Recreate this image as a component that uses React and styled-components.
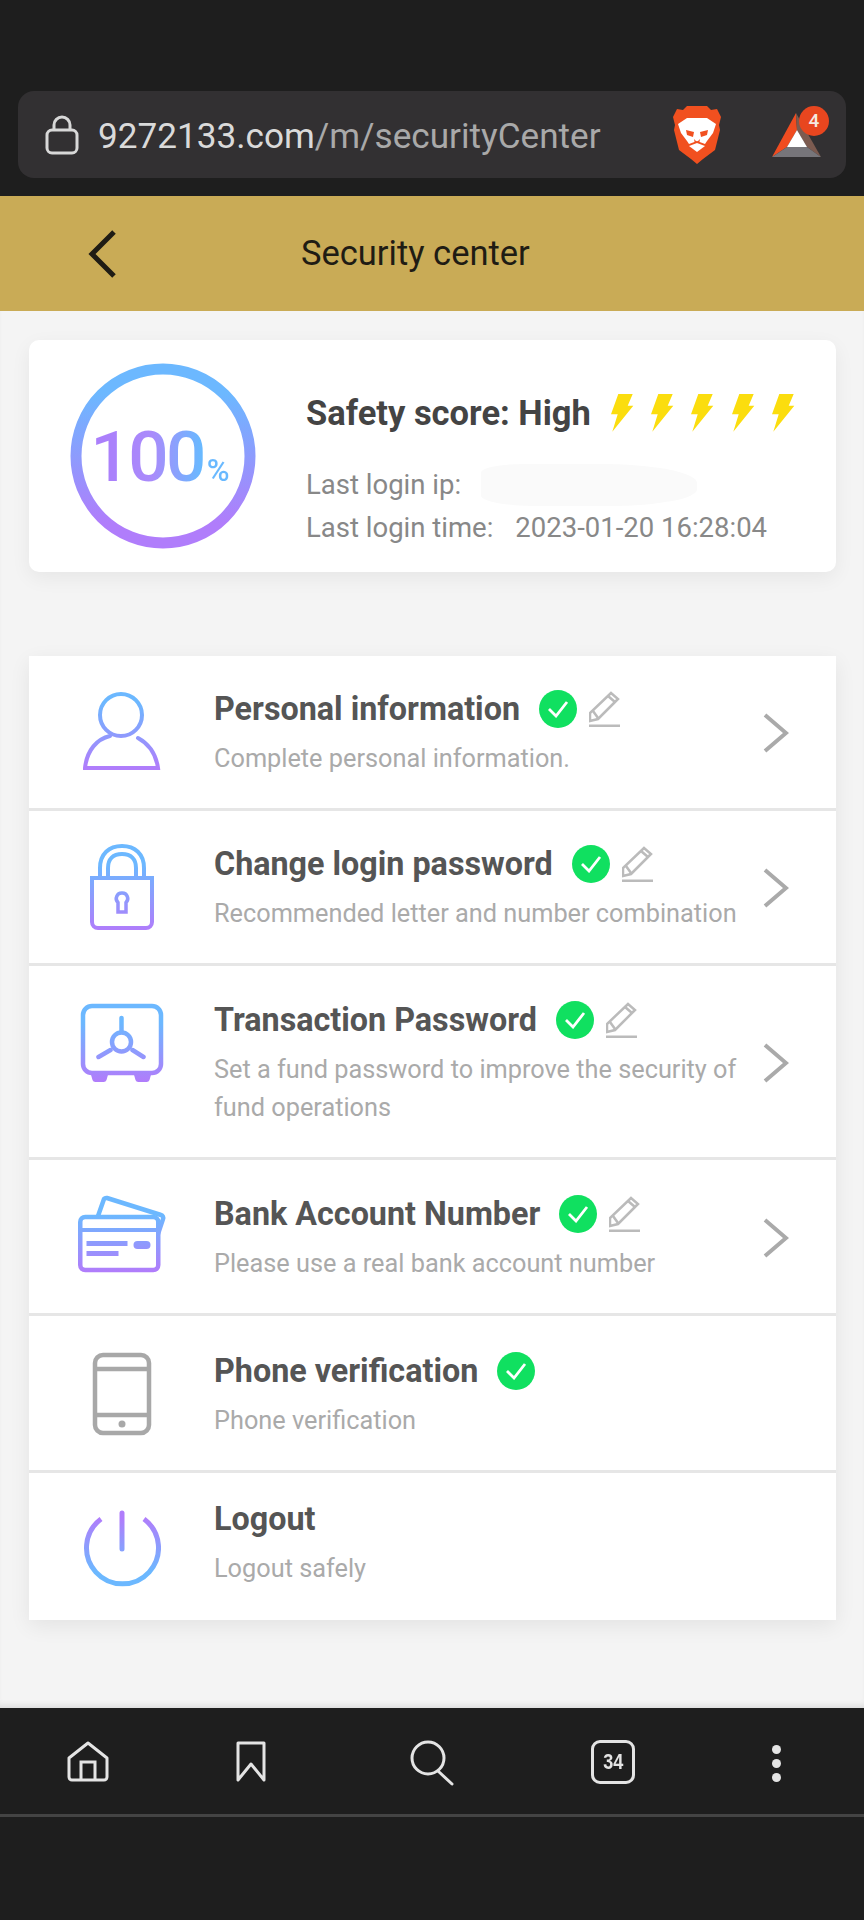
import React from "react";
import styled, { createGlobalStyle } from "styled-components";

const GlobalStyle = createGlobalStyle`
  html, body { margin: 0; padding: 0; background: #f4f4f4; }
  body { font-family: Roboto, "Liberation Sans", sans-serif; }
  * { box-sizing: border-box; }
`;

const Page = styled.div`
  width: 864px;
  height: 1920px;
  display: flex;
  flex-direction: column;
  overflow: hidden;
`;

const BrowserTop = styled.div`
  height: 196px;
  padding: 91px 18px 18px;
  background: #1e1e1e;
`;

const UrlBar = styled.div`
  height: 87px;
  display: flex;
  align-items: center;
  padding: 0 25px 0 27px;
  border-radius: 16px;
  background: #323032;
`;

const Url = styled.div`
  margin-left: 19px;
  padding-top: 3px;
  font-size: 35.15px;
  color: #a9a9a9;
  flex: 1;
  span { color: #dadada; }
`;

const ShieldBox = styled.div`
  width: 48px;
  height: 58px;
  margin-right: 51px;
`;

const RewardBox = styled.div`
  position: relative;
  width: 49px;
  height: 46px;
`;

const Badge = styled.div`
  position: absolute;
  top: -6px;
  right: -8px;
  width: 30px;
  height: 30px;
  border-radius: 50%;
  background: #e8461f;
  color: #f5e9e2;
  font-size: 19px;
  font-weight: 500;
  line-height: 30px;
  text-align: center;
`;

const Header = styled.header`
  height: 115px;
  display: flex;
  align-items: center;
  padding-left: 87px;
  background: #c9ab56;
`;

const Title = styled.h1`
  margin: 0 0 2px 184px;
  font-size: 34.5px;
  font-weight: 400;
  color: #1f1c14;
`;

const Main = styled.main`
  flex: 1;
  padding: 29px 28px 0 29px;
  background: #f4f4f4;
  box-shadow: inset 0 -6px 6px -4px #d8d8d8;
`;

const ScoreCard = styled.section`
  height: 232px;
  display: flex;
  align-items: center;
  padding-left: 41px;
  border-radius: 10px;
  background: #fff;
  box-shadow: 0 6px 20px rgba(0, 0, 0, 0.06);
`;

const Dial = styled.div`
  position: relative;
  width: 186px;
  height: 186px;
  margin-right: 50px;
  padding-right: 7px;
  display: flex;
  align-items: center;
  justify-content: center;
  flex-shrink: 0;
  svg { position: absolute; inset: 0; }
`;

const Percent = styled.div`
  font-size: 71px;
  font-weight: 500;
  line-height: 1;
  letter-spacing: -2.5px;
  background: linear-gradient(90deg, #ab7ffb 10%, #a98bfb 45%, #69b9ff 80%);
  -webkit-background-clip: text;
  background-clip: text;
  color: transparent;
  small { font-size: 31px; font-weight: 500; margin-left: 3px; letter-spacing: -1px; }
`;

const ScoreInfo = styled.div`
  align-self: flex-start;
  padding-top: 51px;
  display: flex;
  flex-direction: column;
`;

const ScoreLine = styled.div`
  display: flex;
  align-items: center;
  height: 44px;
  margin-bottom: 28px;
  font-size: 34.5px;
  font-weight: 700;
  color: #444;
`;

const Bolts = styled.div`
  display: flex;
  gap: 17.3px;
  margin-left: 20px;
`;

const LoginLine = styled.div`
  display: flex;
  align-items: center;
  height: 43px;
  font-size: 27.5px;
  color: #888;
`;

const LoginValue = styled.span`
  margin-left: 22px;
`;

const Smudge = styled.span`
  width: 216px;
  height: 42px;
  margin-left: 20px;
  border-radius: 20% 45% 40% 25%;
  background: #fafafa;
`;

const List = styled.section`
  margin-top: 84px;
  display: flex;
  flex-direction: column;
  gap: 3px;
  background: #e6e6e6;
  box-shadow: 0 6px 20px rgba(0, 0, 0, 0.07);
`;

const Row = styled.div`
  display: flex;
  align-items: flex-start;
  min-height: ${(p) => p.$height}px;
  background: #fff;
  position: relative;
`;

const IconCell = styled.div`
  width: 185px;
  flex-shrink: 0;
  display: flex;
  justify-content: center;
  padding-top: ${(p) => p.$top}px;
`;

const RowText = styled.div`
  flex: 1;
  padding-top: ${(p) => p.$top}px;
`;

const RowTitle = styled.div`
  display: flex;
  align-items: center;
  height: 46px;
  font-size: 32.3px;
  font-weight: 700;
  color: #555;
`;

const Check = styled.span`
  width: 38px;
  height: 38px;
  margin-left: 19px;
  border-radius: 50%;
  background: #10e060;
  display: flex;
  align-items: center;
  justify-content: center;
`;

const Pencil = styled.svg`
  margin-left: 12px;
`;

const RowSub = styled.div`
  width: 535px;
  margin-top: 8px;
  font-size: 25.3px;
  line-height: 38px;
  color: #aaa;
`;

const Arrow = styled.svg`
  align-self: center;
  margin: 2px 47px 0 0;
`;

const BottomBar = styled.footer`
  height: 212px;
  background: #1e1e1e;
`;

const NavIcons = styled.div`
  height: 109px;
  padding-top: 32px;
  display: grid;
  grid-template-columns: 176px 150px 212px 150px 176px;
  justify-items: center;
  align-items: start;
  border-bottom: 3px solid #444;
`;

const TabCount = styled.div`
  width: 44px;
  height: 44px;
  border: 3px solid #e4e4e4;
  border-radius: 9px;
  color: #e4e4e4;
  font-family: "Liberation Sans", sans-serif;
  font-size: 22px;
  font-weight: 700;
  line-height: 38px;
  text-align: center;
  span { display: inline-block; transform: scaleX(0.82); }
`;

const Dots = styled.div`
  display: flex;
  flex-direction: column;
  gap: 5px;
  padding-top: 5px;
  span { width: 9px; height: 9px; border-radius: 50%; background: #e4e4e4; }
`;

const Grad = ({ id, y1, y2, from = "#6cb8ff", to = "#b07dfb" }) => (
  <defs>
    <linearGradient id={id} gradientUnits="userSpaceOnUse" x1="0" x2="0" y1={y1} y2={y2}>
      <stop offset="0" stopColor={from} />
      <stop offset="1" stopColor={to} />
    </linearGradient>
  </defs>
);

const UserIcon = () => (
  <svg width="78" height="78" viewBox="0 0 78 78" fill="none">
    <Grad id="g-user" y1="10" y2="76" />
    <g stroke="url(#g-user)" strokeWidth="4" strokeLinecap="round">
      <circle cx="38" cy="23" r="21" />
      <path d="M55 46c11 6 18 16 20 30H2C4 58 14 47 27 44" />
    </g>
  </svg>
);

const LockIcon = () => (
  <svg width="66" height="86" viewBox="0 0 66 86" fill="none">
    <Grad id="g-lock" y1="20" y2="86" />
    <g stroke="url(#g-lock)" strokeWidth="4">
      <path d="M11 34V24C11 10 20 2 33 2s22 8 22 22v10" />
      <path d="M19 34V24c0-9 5-14 14-14s14 5 14 14v10" />
      <path d="M3 34h60v44a6 6 0 0 1-6 6H9a6 6 0 0 1-6-6z" />
      <path d="M33 49a5.500 5.500 0 0 1 4 9.500V68h-8v-9.500A5.500 5.500 0 0 1 33 49z" strokeWidth="3.500" />
    </g>
  </svg>
);

const SafeIcon = () => (
  <svg width="84" height="80" viewBox="0 0 84 80" fill="none">
    <Grad id="g-safe" y1="20" y2="78" />
    <g stroke="url(#g-safe)" strokeWidth="4.500" strokeLinecap="round">
      <rect x="3" y="3" width="78" height="67" rx="9" />
      <path d="M41.500 15v14M30.500 47l-12 7M52.500 47l11 7" />
      <circle cx="41.500" cy="39" r="9.500" />
    </g>
    <path d="M10.500 70h18l-2 7a3 3 0 0 1-3 2h-8a3 3 0 0 1-3-2zM53.500 70h18l-2 7a3 3 0 0 1-3 2h-8a3 3 0 0 1-3-2z" fill="url(#g-safe)" />
  </svg>
);

const CardIcon = () => (
  <svg width="88" height="78" viewBox="0 0 88 78" fill="none">
    <Grad id="g-card" y1="20" y2="76" />
    <g stroke="url(#g-card)" strokeWidth="4.500" strokeLinejoin="round">
      <path d="M20 21l6-17a3 3 0 0 1 3-1l54 17a3 3 0 0 1 2 4l-5 15" />
      <rect x="2.250" y="22" width="78" height="53" rx="5" />
      <path d="M2 35h78" strokeWidth="4" />
    </g>
    <g fill="url(#g-card)">
      <rect x="8.500" y="46" width="41" height="5" />
      <rect x="55.500" y="46" width="17" height="8" rx="4" />
      <rect x="8.500" y="56" width="32" height="5" />
    </g>
  </svg>
);

const PhoneIcon = () => (
  <svg width="60" height="84" viewBox="0 0 60 84" fill="none">
    <g stroke="#a8a8a8" strokeWidth="4.500">
      <rect x="3" y="3" width="54" height="78" rx="8" />
      <path d="M3 17h54M3 63h54" />
    </g>
    <circle cx="30" cy="72" r="3.500" fill="#a8a8a8" />
  </svg>
);

const PowerIcon = () => (
  <svg width="78" height="78" viewBox="0 0 78 78" fill="none">
    <Grad id="g-power" y1="8" y2="62" from="#b07dfb" to="#6cb8ff" />
    <g stroke="url(#g-power)" strokeWidth="5">
      <path d="M18 9a36 36 0 1 0 43 0" />
      <path d="M39 3v36" strokeLinecap="round" />
    </g>
  </svg>
);

const rows = [
  { Icon: UserIcon, title: "Personal information", sub: "Complete personal information.", height: 152, iconTop: 36, top: 30, edit: true },
  { Icon: LockIcon, title: "Change login password", sub: "Recommended letter and number combination", height: 152, iconTop: 33, top: 30, edit: true },
  { Icon: SafeIcon, title: "Transaction Password", sub: "Set a fund password to improve the security of fund operations", height: 191, iconTop: 37, top: 31, edit: true },
  { Icon: CardIcon, title: "Bank Account Number", sub: "Please use a real bank account number", height: 153, iconTop: 35, top: 31, edit: true },
  { Icon: PhoneIcon, title: "Phone verification", sub: "Phone verification", height: 154, iconTop: 36, top: 32, edit: false, noArrow: true },
  { Icon: PowerIcon, title: "Logout", sub: "Logout safely", height: 147, iconTop: 37, top: 23, noCheck: true, noArrow: true },
];

export default function App() {
  return (
    <Page>
      <GlobalStyle />
      <BrowserTop>
        <UrlBar>
          <svg width="34" height="40" viewBox="0 0 34 40" fill="none" stroke="#d8d8d8" strokeWidth="3">
            <path d="M9 15V10a8 8 0 0 1 16 0v5" />
            <rect x="2" y="15" width="30" height="23" rx="5" />
          </svg>
          <Url><span>9272133.com</span>/m/securityCenter</Url>
          <ShieldBox>
            <svg width="48" height="58" viewBox="0 0 48 58">
              <path d="M14 0h20l4 4 6-1 4 8-2 8 1 5-5 20-12 9-6 5-6-5-12-9L1 24l1-5-2-8 4-8 6 1z" fill="#f1501f" />
              <path d="M5 18l9-6h20l9 6-3 9-6 8-2 3-8-3-8 3-2-3-6-8z" fill="#fff" />
              <path d="M13 24l8 2-1 5-6-2zM35 24l-8 2 1 5 6-2zM21 33l3 3 3-3-1 5-2 2-2-2z" fill="#f1501f" />
              <path d="M16 40l8-3 8 3-8 6z" fill="#fff" />
            </svg>
          </ShieldBox>
          <RewardBox>
            <svg width="49" height="46" viewBox="0 0 49 46">
              <path d="M24 1L0 45l15-10 10-17z" fill="#f04c20" />
              <path d="M24 1l25 44-14-10-10-17z" fill="#7c5b50" />
              <path d="M25 18l10 17H15z" fill="#fff" />
              <path d="M15 35h20l14 10H0z" fill="#77757a" />
            </svg>
            <Badge>4</Badge>
          </RewardBox>
        </UrlBar>
      </BrowserTop>

      <Header>
        <svg width="30" height="48" viewBox="0 0 30 48" fill="none" stroke="#1f1c14" strokeWidth="5">
          <path d="M27 2L5 24l22 22" />
        </svg>
        <Title>Security center</Title>
      </Header>

      <Main>
        <ScoreCard>
          <Dial>
            <svg width="186" height="186" viewBox="0 0 186 186" fill="none">
              <Grad id="g-dial" y1="30" y2="160" />
              <circle cx="93" cy="93" r="87" stroke="url(#g-dial)" strokeWidth="11" />
            </svg>
            <Percent>100<small>%</small></Percent>
          </Dial>
          <ScoreInfo>
            <ScoreLine>
              Safety score: High
              <Bolts>
                {[0, 1, 2, 3, 4].map((i) => (
                  <svg key={i} width="23" height="38" viewBox="0 0 23 38">
                    <path d="M7.300 0H21.700L16.700 11.700H22.300L1.300 37.700 6.700 20.300H0z" fill="#fbdd0e" />
                  </svg>
                ))}
              </Bolts>
            </ScoreLine>
            <LoginLine>Last login ip:<Smudge /></LoginLine>
            <LoginLine>Last login time:<LoginValue>2023-01-20 16:28:04</LoginValue></LoginLine>
          </ScoreInfo>
        </ScoreCard>

        <List>
          {rows.map(({ Icon, title, sub, height, iconTop, top, edit, noCheck, noArrow }) => (
            <Row key={title} $height={height}>
              <IconCell $top={iconTop}><Icon /></IconCell>
              <RowText $top={top}>
                <RowTitle>
                  {title}
                  {!noCheck && (
                    <Check>
                      <svg width="22" height="18" viewBox="0 0 22 18" fill="none" stroke="#fff" strokeWidth="2.800">
                        <path d="M2 9l7 7L20 2" />
                      </svg>
                    </Check>
                  )}
                  {edit && (
                    <Pencil width="31" height="36" viewBox="0 0 31 36" fill="none" stroke="#bbb" strokeWidth="2.500">
                      <path d="M1 30v-8L22 2l7 6-20 20z" />
                      <path d="M19 5l7 6M4 20l5 7" />
                      <path d="M0 35h31" strokeWidth="3" />
                    </Pencil>
                  )}
                </RowTitle>
                <RowSub>{sub}</RowSub>
              </RowText>
              {!noArrow && (
                <Arrow width="26" height="40" viewBox="0 0 26 40" fill="none" stroke="#aaa" strokeWidth="4">
                  <path d="M2 2l21 18L2 38" />
                </Arrow>
              )}
            </Row>
          ))}
        </List>
      </Main>

      <BottomBar>
        <NavIcons>
          <svg width="42" height="42" viewBox="0 0 42 42" fill="none" stroke="#e4e4e4" strokeWidth="3">
            <path d="M21 3L40 18v19a3 3 0 0 1-3 3H5a3 3 0 0 1-3-3V18z" strokeLinejoin="round" />
            <path d="M14 40V22h14v18" />
          </svg>
          <svg width="30" height="42" viewBox="0 0 30 42" fill="none" stroke="#e4e4e4" strokeWidth="3" strokeLinejoin="round">
            <path d="M2 3h26v37L15 24 2 40z" />
          </svg>
          <svg width="44" height="46" viewBox="0 0 44 46" fill="none" stroke="#e4e4e4" strokeWidth="3" strokeLinecap="round">
            <circle cx="18" cy="18" r="16" />
            <path d="M28 31l14 13" />
          </svg>
          <TabCount><span>34</span></TabCount>
          <Dots><span /><span /><span /></Dots>
        </NavIcons>
      </BottomBar>
    </Page>
  );
}
